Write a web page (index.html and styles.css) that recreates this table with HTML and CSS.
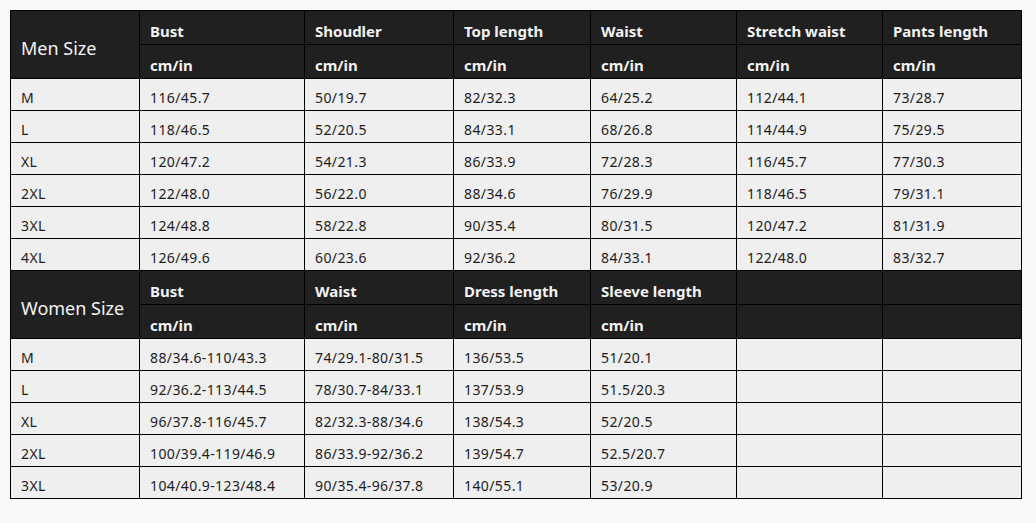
FILE: index.html
```html
<!DOCTYPE html>
<html>
<head>
<meta charset="utf-8">
<link rel="stylesheet" href="styles.css">
</head>
<body>
<table class="size-table">
  <colgroup>
    <col class="c1"><col class="c2"><col class="c3"><col class="c4"><col class="c5"><col class="c6"><col class="c7">
  </colgroup>
  <tbody>
    <tr class="head">
      <th class="group" rowspan="2">Men Size</th>
      <th>Bust</th><th>Shoudler</th><th>Top length</th><th>Waist</th><th>Stretch waist</th><th>Pants length</th>
    </tr>
    <tr class="head">
      <th>cm/in</th><th>cm/in</th><th>cm/in</th><th>cm/in</th><th>cm/in</th><th>cm/in</th>
    </tr>
    <tr><td>M</td><td>116/45.7</td><td>50/19.7</td><td>82/32.3</td><td>64/25.2</td><td>112/44.1</td><td>73/28.7</td></tr>
    <tr><td>L</td><td>118/46.5</td><td>52/20.5</td><td>84/33.1</td><td>68/26.8</td><td>114/44.9</td><td>75/29.5</td></tr>
    <tr><td>XL</td><td>120/47.2</td><td>54/21.3</td><td>86/33.9</td><td>72/28.3</td><td>116/45.7</td><td>77/30.3</td></tr>
    <tr><td>2XL</td><td>122/48.0</td><td>56/22.0</td><td>88/34.6</td><td>76/29.9</td><td>118/46.5</td><td>79/31.1</td></tr>
    <tr><td>3XL</td><td>124/48.8</td><td>58/22.8</td><td>90/35.4</td><td>80/31.5</td><td>120/47.2</td><td>81/31.9</td></tr>
    <tr><td>4XL</td><td>126/49.6</td><td>60/23.6</td><td>92/36.2</td><td>84/33.1</td><td>122/48.0</td><td>83/32.7</td></tr>
    <tr class="head">
      <th class="group" rowspan="2">Women Size</th>
      <th>Bust</th><th>Waist</th><th>Dress length</th><th>Sleeve length</th><th></th><th></th>
    </tr>
    <tr class="head">
      <th>cm/in</th><th>cm/in</th><th>cm/in</th><th>cm/in</th><th></th><th></th>
    </tr>
    <tr><td>M</td><td>88/34.6-110/43.3</td><td>74/29.1-80/31.5</td><td>136/53.5</td><td>51/20.1</td><td></td><td></td></tr>
    <tr><td>L</td><td>92/36.2-113/44.5</td><td>78/30.7-84/33.1</td><td>137/53.9</td><td>51.5/20.3</td><td></td><td></td></tr>
    <tr><td>XL</td><td>96/37.8-116/45.7</td><td>82/32.3-88/34.6</td><td>138/54.3</td><td>52/20.5</td><td></td><td></td></tr>
    <tr><td>2XL</td><td>100/39.4-119/46.9</td><td>86/33.9-92/36.2</td><td>139/54.7</td><td>52.5/20.7</td><td></td><td></td></tr>
    <tr><td>3XL</td><td>104/40.9-123/48.4</td><td>90/35.4-96/37.8</td><td>140/55.1</td><td>53/20.9</td><td></td><td></td></tr>
  </tbody>
</table>
</body>
</html>
```

FILE: styles.css
```css
html, body {
  margin: 0;
  background: #f9f9f9;
}
body {
  padding: 10px;
  font-family: "Noto Sans", "Open Sans", sans-serif;
}
.size-table {
  border-collapse: collapse;
  table-layout: fixed;
  width: 1011px;
  border: 1px solid #000;
}
.c1 { width: 129px; }
.c2 { width: 165px; }
.c3 { width: 149px; }
.c4 { width: 137px; }
.c5 { width: 146px; }
.c6 { width: 146px; }
.c7 { width: 139px; }

.size-table th,
.size-table td {
  border: 1px solid #000;
  padding: 9px 10px 0;
  vertical-align: top;
  text-align: left;
  white-space: nowrap;
}
.size-table tr { height: 32px; }
.size-table tr.head { height: 34px; }

.size-table td {
  background: #efefef;
  color: #1c1c1c;
  font-size: 14px;
  line-height: 19px;
  letter-spacing: 0.4px;
  font-weight: 400;
}
.size-table th {
  background: #202020;
  color: #f2f2f2;
  font-size: 15px;
  line-height: 20px;
  font-weight: 700;
  padding-top: 10px;
}
.size-table th.group {
  font-size: 18px;
  font-weight: 400;
  vertical-align: middle;
  padding-top: 6px;
  color: #f4f4f4;
}
```
